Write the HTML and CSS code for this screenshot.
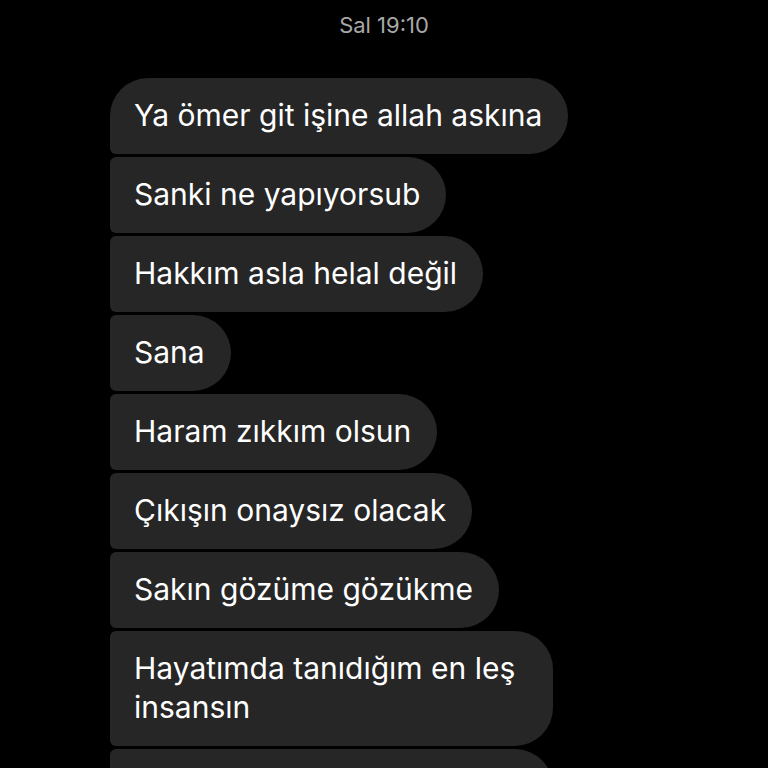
FILE: index.html
```html
<!DOCTYPE html>
<html lang="tr">
<head>
<meta charset="utf-8">
<link rel="stylesheet" href="styles.css">
</head>
<body>
<div class="chat">
  <div class="time">Sal 19:10</div>
  <div class="messages">
    <div class="bubble first">Ya ömer git işine allah askına</div>
    <div class="bubble">Sanki ne yapıyorsub</div>
    <div class="bubble">Hakkım asla helal değil</div>
    <div class="bubble">Sana</div>
    <div class="bubble">Haram zıkkım olsun</div>
    <div class="bubble">Çıkışın onaysız olacak</div>
    <div class="bubble">Sakın gözüme gözükme</div>
    <div class="bubble multi">Hayatımda tanıdığım en leş<br>insansın</div>
    <div class="bubble next">&nbsp;</div>
  </div>
</div>
</body>
</html>
```

FILE: styles.css
```css
html, body {
  margin: 0;
  padding: 0;
  background: #000;
  height: 100%;
  overflow: hidden;
}
.chat {
  font-family: Inter, Roboto, "Noto Sans", sans-serif;
  display: flex;
  flex-direction: column;
}
.time {
  color: #a8a8a8;
  font-size: 22px;
  text-align: center;
  height: 78px;
  line-height: 50px;
}
.messages {
  display: flex;
  flex-direction: column;
  align-items: flex-start;
  gap: 3px;
  padding-left: 110px;
}
.bubble {
  background: #262626;
  color: #fff;
  font-size: 30px;
  line-height: 39px;
  padding: 18px 26px 19px 24px;
  border-radius: 6px 38px 38px 6px;
}
.bubble.first {
  border-top-left-radius: 38px;
}
.bubble.multi {
  padding-right: 38px;
}
.bubble.next {
  width: 393px;
}
```
